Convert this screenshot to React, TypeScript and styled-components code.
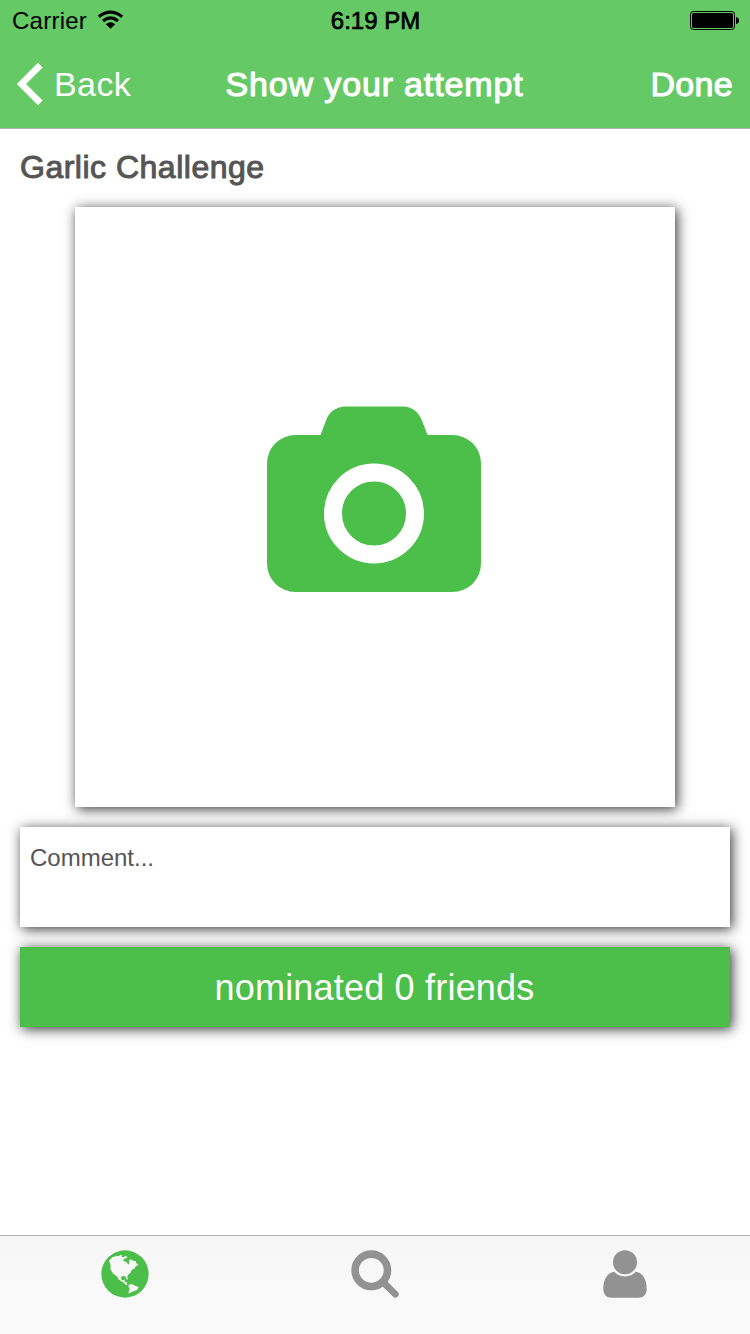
import React from "react";
import styled, { createGlobalStyle, css } from "styled-components";

const green = "#4bbf49";
const gray = "#929292";

const GlobalStyle = createGlobalStyle`
  * { box-sizing: border-box; }
  body { margin: 0; background: #fff; font-family: "Liberation Sans", Arial, sans-serif; }
`;

const raised = css`
  box-shadow: 2px 2px 12px rgba(0, 0, 0, 0.8);
`;

const Screen = styled.div`
  width: 750px;
  height: 1334px;
  display: flex;
  flex-direction: column;
  overflow: hidden;
  background: #fff;
`;

const Header = styled.header`
  flex: none;
  height: 129px;
  background: #65c965;
  border-bottom: 1px solid #b0b5b0;
`;

const StatusBar = styled.div`
  height: 40px;
  padding: 0 11px 0 12px;
  display: grid;
  grid-template-columns: 1fr auto 1fr;
  align-items: center;
  color: #000;
`;

const Carrier = styled.div`
  display: flex;
  align-items: center;
  gap: 10px;
`;

const BatterySlot = styled.div`
  display: flex;
  justify-content: flex-end;
`;

const Text = styled.span<{ $size: number; $spacing?: number; $weight?: number; $drop?: number }>`
  font-size: ${(p) => p.$size}px;
  line-height: 1.15;
  white-space: nowrap;
  letter-spacing: ${(p) => p.$spacing ?? 0}px;
  -webkit-text-stroke: ${(p) => p.$weight ?? 0}px currentColor;
  padding-top: ${(p) => p.$drop ?? 0}px;
`;

const NavBar = styled.nav`
  height: 88px;
  padding: 0 17px 0 16px;
  display: grid;
  grid-template-columns: 1fr auto 1fr;
  align-items: center;
  color: #fff;
`;

const NavButton = styled.button<{ $end?: boolean }>`
  display: flex;
  align-items: center;
  justify-content: ${(p) => (p.$end ? "flex-end" : "flex-start")};
  gap: 11px;
  padding: 0;
  border: 0;
  background: none;
  color: inherit;
  font-family: inherit;
`;

const Content = styled.main`
  flex: 1;
  display: flex;
  flex-direction: column;
  padding: 0 20px;
`;

const Title = styled.h1`
  margin: 0;
  height: 78px;
  padding-bottom: 2px;
  display: flex;
  align-items: center;
  color: #555;
  font-weight: 400;
`;

const PhotoPicker = styled.button`
  ${raised}
  align-self: center;
  width: 600px;
  height: 600px;
  padding: 0 2px 16px 0;
  border: 0;
  background: #fff;
  display: flex;
  align-items: center;
  justify-content: center;
`;

const CommentBox = styled.div`
  ${raised}
  margin-top: 20px;
  height: 100px;
  padding: 17px 10px;
  background: #fff;
  color: #555;
`;

const NominateButton = styled.button`
  ${raised}
  margin-top: 20px;
  height: 80px;
  padding: 1px 1px 0 0;
  border: 0;
  background: ${green};
  color: #fff;
  font-family: inherit;
`;

const TabBar = styled.footer`
  flex: none;
  height: 99px;
  display: grid;
  grid-template-columns: repeat(3, 1fr);
  border-top: 1px solid #b2b2b2;
  background: linear-gradient(#f7f7f7, #fafafa);
`;

const Tab = styled.button<{ $active?: boolean }>`
  display: flex;
  justify-content: center;
  align-items: flex-start;
  padding: 14px 0 0;
  border: 0;
  background: none;
  color: ${(p) => (p.$active ? green : gray)};
`;

const WifiIcon = () => (
  <svg width="26" height="20" viewBox="0 0 26 20">
    <g fill="none" stroke="#000" strokeWidth="3.2">
      <path d="M1.8 6.8 Q13.5 -2.4 25.2 6.8" />
      <path d="M6 10.9 Q13.5 5 21 10.9" />
    </g>
    <path d="M8.8 14.2 Q13.5 10.4 18.2 14.2 L13.5 18.8 Z" />
  </svg>
);

const BatteryIcon = () => (
  <svg width="49" height="19" viewBox="0 0 49 19">
    <rect x="0.5" y="0.5" width="44" height="18" rx="2.8" fill="none" stroke="#000" />
    <rect x="2" y="2" width="41" height="15" rx="1.6" />
    <path d="M46 6 Q49 6.5 49 9.5 Q49 12.5 46 13 Z" />
  </svg>
);

const ChevronIcon = () => (
  <svg width="27" height="44" viewBox="0 0 27 44">
    <path d="M24.3 3.2 L5.5 22 L24.3 40.8" fill="none" stroke="#fff" strokeWidth="6.6" />
  </svg>
);

const CameraIcon = () => (
  <svg width="216" height="186" viewBox="0 0 216 186">
    <path
      fill={green}
      d="M1 57.5 A28.5 28.5 0 0 1 29.5 29 H54.5 L60 14.5 C63 6 70 .5 80 .5 H137 C147 .5 153 7 156 14.5 L161.5 29 H186.5 A28.5 28.5 0 0 1 215 57.5 V157.5 A28.5 28.5 0 0 1 186.5 186 H29.5 A28.5 28.5 0 0 1 1 157.5 Z"
    />
    <circle cx="108" cy="107.5" r="41" fill="none" stroke="#fff" strokeWidth="18" />
  </svg>
);

const GlobeIcon = () => (
  <svg width="48" height="48" viewBox="63 75 144 144">
    <circle cx="135" cy="147" r="71" fill="currentColor" />
    <path
      fill="#f8f8f8"
      d="M86 108 L97 97 L107 94 L118 92 L122 89 L127 92 L124 96 L131 97 L135 93 L143 96 L140 99 L133 101 L129 107 L139 111 L146 119 L148 112 L147 106 L152 103 L161 108 L168 109 L168 113 L175 119 L166 125 L165 130 L155 135 L151 144 L144 150 L142 156 L143 165 L139 162 L136 154 L127 153 L123 158 L125 165 L130 166 L134 163 L134 170 L140 172 L142 181 L137 179 L132 173 L124 169 L115 163 L113 156 L100 146 L91 133 L92 123 L90 113 Z"
    />
    <path
      fill="#f8f8f8"
      d="M147 179 L156 177 L165 182 L176 186 L172 194 L160 199 L148 205 L145 204 L149 192 L145 184 Z"
    />
  </svg>
);

const SearchIcon = () => (
  <svg width="48" height="48" viewBox="0 0 48 48" fill="none" stroke="currentColor">
    <circle cx="20.3" cy="20.3" r="16.2" strokeWidth="7.6" />
    <path d="M32 32 L44.3 44.2" strokeWidth="6.8" strokeLinecap="round" />
  </svg>
);

const PersonIcon = () => (
  <svg width="48" height="48" viewBox="0 0 48 48" fill="currentColor">
    <circle cx="24" cy="12.2" r="12" />
    <path d="M13.3 21.8 C16 24.8 19.5 26.4 24 26.4 C28.5 26.4 32 24.8 34.7 21.8 C41 22.3 45.7 29 45.7 38.8 C45.7 44.5 42.5 47.8 37.5 47.8 H10.5 C5.5 47.8 2.3 44.5 2.3 38.8 C2.3 29 7 22.3 13.3 21.8 Z" />
  </svg>
);

export default function App() {
  return (
    <>
      <GlobalStyle />
      <Screen>
        <Header>
          <StatusBar>
            <Carrier>
              <Text $size={24} $spacing={0.25} $drop={1}>Carrier</Text>
              <WifiIcon />
            </Carrier>
            <Text $size={24} $weight={0.7} $drop={1}>6:19 PM</Text>
            <BatterySlot>
              <BatteryIcon />
            </BatterySlot>
          </StatusBar>
          <NavBar>
            <NavButton>
              <ChevronIcon />
              <Text $size={34} $spacing={0.4} $drop={2}>Back</Text>
            </NavButton>
            <Text $size={34} $spacing={0.85} $weight={1.1} $drop={2}>Show your attempt</Text>
            <NavButton $end>
              <Text $size={34} $spacing={0.3} $weight={1.1} $drop={2}>Done</Text>
            </NavButton>
          </NavBar>
        </Header>
        <Content>
          <Title>
            <Text $size={32} $spacing={0.5} $weight={1}>Garlic Challenge</Text>
          </Title>
          <PhotoPicker aria-label="Take photo">
            <CameraIcon />
          </PhotoPicker>
          <CommentBox>
            <Text $size={24}>Comment...</Text>
          </CommentBox>
          <NominateButton>
            <Text $size={36} $spacing={0.2}>nominated 0 friends</Text>
          </NominateButton>
        </Content>
        <TabBar>
          <Tab $active aria-label="Explore">
            <GlobeIcon />
          </Tab>
          <Tab aria-label="Search">
            <SearchIcon />
          </Tab>
          <Tab aria-label="Profile">
            <PersonIcon />
          </Tab>
        </TabBar>
      </Screen>
    </>
  );
}
